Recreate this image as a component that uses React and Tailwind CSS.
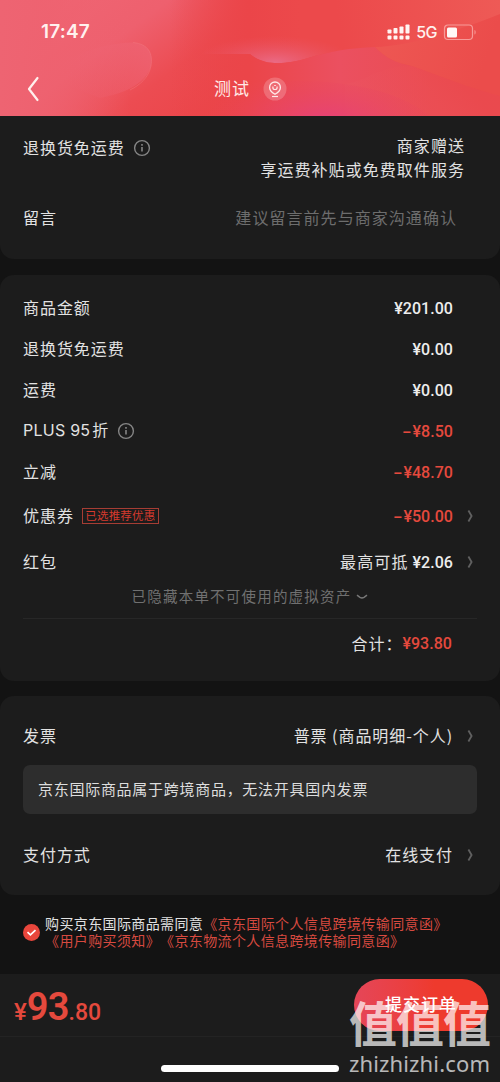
import React from "react";

function InfoIcon() {
  return (
    <svg width="18" height="18" viewBox="0 0 18 18" fill="none" stroke="#858585" className="ml-[8px] mt-px shrink-0">
      <circle cx="9" cy="9" r="7.4" strokeWidth="1.4" />
      <path d="M9 7.9V12.6M9 5V6.7" strokeWidth="1.6" />
    </svg>
  );
}

function Chevron() {
  return (
    <svg width="8" height="14" viewBox="0 0 8 14" fill="none" stroke="#606060" strokeWidth="1.8" className="ml-[14px] mr-[2px] shrink-0">
      <path d="M1.4 1.5L4.6 7L1.4 12.5" />
    </svg>
  );
}

function Row({ label, extra, value, arrow, className }) {
  return (
    <div className={"flex items-center justify-between pl-[23px] " + (arrow ? "pr-[23px] " : "pr-[47px] ") + className}>
      <div className="flex items-center">
        <span className="pb-[2px]">{label}</span>
        {extra}
      </div>
      <div className="flex items-center">
        {value}
        {arrow && <Chevron />}
      </div>
    </div>
  );
}

function Money({ children, red, minus }) {
  return (
    <span className={"flex items-center pt-[2px] font-[Roboto,sans-serif] text-[16px] font-medium tracking-[0.05px] " + (red ? "text-[#e5493d]" : "text-[#ededed]")}>
      {minus && <span className="mr-px inline-block origin-right scale-x-[1.7]">-</span>}
      {children}
    </span>
  );
}

function HeaderArt() {
  return (
    <svg className="absolute inset-0" width="500" height="116" viewBox="0 0 500 116">
      <defs>
        <linearGradient id="base" x1="30" y1="0" x2="170" y2="190" gradientUnits="userSpaceOnUse">
          <stop offset="0" stopColor="#ef6674" />
          <stop offset="0.35" stopColor="#ee606e" />
          <stop offset="0.6" stopColor="#ec4c52" />
          <stop offset="1" stopColor="#ea4144" />
        </linearGradient>
        <linearGradient id="left" x1="0" y1="0" x2="130" y2="0" gradientUnits="userSpaceOnUse">
          <stop offset="0" stopColor="#ee6472" />
          <stop offset="0.35" stopColor="#ee6270" stopOpacity="0.8" />
          <stop offset="1" stopColor="#ee6270" stopOpacity="0" />
        </linearGradient>
        <linearGradient id="blob" x1="70" y1="90" x2="152" y2="52" gradientUnits="userSpaceOnUse">
          <stop offset="0" stopColor="#ee6272" stopOpacity="0" />
          <stop offset="1" stopColor="#ee6474" stopOpacity="0.75" />
        </linearGradient>
        <linearGradient id="mid" x1="170" y1="0" x2="300" y2="0" gradientUnits="userSpaceOnUse">
          <stop offset="0" stopColor="#ea4448" stopOpacity="0" />
          <stop offset="0.6" stopColor="#eb4549" />
          <stop offset="1" stopColor="#ec494b" />
        </linearGradient>
        <radialGradient id="pink" cx="0" cy="0" r="1" gradientTransform="translate(275 62) scale(80 26)" gradientUnits="userSpaceOnUse">
          <stop offset="0" stopColor="#ea6a84" />
          <stop offset="1" stopColor="#ea5566" stopOpacity="0" />
        </radialGradient>
        <linearGradient id="glow" x1="340" y1="30" x2="500" y2="0" gradientUnits="userSpaceOnUse">
          <stop offset="0" stopColor="#ee5a56" stopOpacity="0" />
          <stop offset="1" stopColor="#ee5a56" />
        </linearGradient>
        <linearGradient id="wave" x1="250" y1="0" x2="430" y2="0" gradientUnits="userSpaceOnUse">
          <stop offset="0" stopColor="#eb4549" />
          <stop offset="0.5" stopColor="#eb5060" />
          <stop offset="1" stopColor="#ea4c52" />
        </linearGradient>
        <linearGradient id="right" x1="385" y1="50" x2="480" y2="80" gradientUnits="userSpaceOnUse">
          <stop offset="0" stopColor="#ed5652" />
          <stop offset="1" stopColor="#eb4c4b" />
        </linearGradient>
        <linearGradient id="shade" x1="375" y1="116" x2="450" y2="60" gradientUnits="userSpaceOnUse">
          <stop offset="0" stopColor="#eb5462" />
          <stop offset="0.6" stopColor="#ec4f55" />
          <stop offset="1" stopColor="#ea4648" />
        </linearGradient>
        <radialGradient id="low" cx="0" cy="0" r="1" gradientTransform="translate(325 120) scale(120 48)" gradientUnits="userSpaceOnUse">
          <stop offset="0" stopColor="#e74276" />
          <stop offset="1" stopColor="#e9465a" stopOpacity="0" />
        </radialGradient>
        <clipPath id="above">
          <path d="M180 0H500V47H375C350 48 331 51 308 58C285 65 264 66 250 54L180 54Z" />
        </clipPath>
      </defs>
      <rect width="500" height="116" fill="url(#base)" />
      <rect width="500" height="116" fill="url(#left)" />
      <path d="M40 75C65 60 95 43 133 42.500C149 44 153 54 151 66C146 82 130 92 100 98Z" fill="url(#blob)" />
      <path d="M133 42.500C149 44 153 54 151 66C149 77 140 85 130 90" fill="none" stroke="#f37c84" strokeOpacity="0.4" />
      <rect width="500" height="116" fill="url(#mid)" />
      <g clipPath="url(#above)">
        <rect x="190" y="30" width="170" height="50" fill="url(#pink)" />
        <rect x="300" width="200" height="60" fill="url(#glow)" />
      </g>
      <path d="M250 54C264 66 285 65 308 58C331 51 350 48 375 47C386 58 394 62 412 66C440 76 470 88 500 96V116H250Z" fill="url(#wave)" />
      <path d="M375 47C410 46 460 30 500 14V96C470 88 440 76 412 66C394 62 386 58 375 47Z" fill="url(#right)" />
      <path d="M345 84C370 80 380 65 412 66C440 76 470 88 500 96V116H345Z" fill="url(#shade)" opacity="0.4" />
      <path d="M200 86C260 80 310 79 345 84C385 90 410 100 430 116H200Z" fill="url(#low)" />
    </svg>
  );
}

function StatusBar() {
  const heights = [4, 5.5, 7, 9];
  return (
    <div className="flex h-[64px] items-center justify-between pl-[41px] pr-[23px]">
      <span className="text-[19px] font-semibold tracking-[0.2px] text-[#fff1ee] font-[Inter,sans-serif]">17:47</span>
      <div className="flex items-center">
        <svg width="24" height="18" viewBox="0 0 24 18" fill="#fff4f2" className="mr-px">
          {heights.map((h, i) => (
            <g key={i}>
              <rect x={0.5 + i * 6} y={10.5 - h} width="4" height={h} rx="0.8" />
              <rect x={0.5 + i * 6} y="12.500" width="4" height="4" rx="1" />
            </g>
          ))}
        </svg>
        <span className="ml-[4px] text-[16px] leading-none text-[#fff1ee] font-[Inter,sans-serif] font-medium tracking-[-0.5px]">5G</span>
        <svg width="34" height="17" viewBox="0 0 34 17" className="ml-[6px]">
          <rect x="1.500" y="1" width="28" height="14.500" rx="3.500" fill="none" stroke="#f79a98" strokeWidth="1.200" />
          <rect x="4" y="3.500" width="10" height="10" rx="1.500" fill="#fff8f6" />
          <path d="M31.500 6V10.500C33 10 33 6.500 31.500 6Z" fill="#f79a98" />
        </svg>
      </div>
    </div>
  );
}

export default function App() {
  return (
    <div className="flex h-[1082px] w-[500px] flex-col overflow-hidden bg-[#131313] text-[16px] leading-[24px] tracking-[0.95px] text-[#e2e2e2] font-['Noto_Sans_CJK_SC',sans-serif]">
      <header className="relative h-[116px] shrink-0 overflow-hidden">
        <HeaderArt />
        <div className="relative">
          <StatusBar />
          <div className="grid h-[49px] grid-cols-[214px_1fr] items-center">
            <svg width="16" height="28" viewBox="0 0 16 28" fill="none" stroke="#fff0ed" strokeWidth="2.200" className="ml-[25px]" strokeLinecap="round" strokeLinejoin="round">
              <path d="M12.500 3L4 14L12.500 25" />
            </svg>
            <div className="flex items-center">
              <span className="pb-[2px] text-[17px] text-[#ffe9e6]">测试</span>
              <svg width="24" height="24" viewBox="0 0 24 24" fill="none" stroke="#ffe8e8" className="ml-[13px]">
                <circle cx="12" cy="12" r="11.500" fill="#fff" fillOpacity="0.2" stroke="none" />
                <path d="M12 17.300C9 15.500 6.600 13.300 6.600 10.400A5.400 5.400 0 0 1 17.400 10.400C17.400 13.300 15 15.500 12 17.300Z" strokeWidth="1.300" />
                <path d="M9.900 9.600V10.400A2.100 2.100 0 0 0 14.100 10.400V9.600M11.200 8.500H12.800" strokeWidth="1.200" />
                <path d="M9 19.500H15" strokeWidth="1.200" />
              </svg>
            </div>
          </div>
        </div>
      </header>

      <section className="h-[143px] shrink-0 rounded-b-[14px] bg-[#1c1c1c] pt-[17px]">
        <div className="flex h-[50px] justify-between pl-[23px] pr-[35px]">
          <div className="flex h-[28px] items-center">
            <span>退换货免运费</span>
            <InfoIcon />
          </div>
          <div className="text-right leading-[24px] tracking-[1.050px]">
            <div>商家赠送</div>
            <div>享运费补贴或免费取件服务</div>
          </div>
        </div>
        <Row
          className="mt-[18px] h-[34px] pr-[43px]!"
          label="留言"
          value={<span className="pb-[2px] tracking-[1.050px] text-[#6d6d6d]">建议留言前先与商家沟通确认</span>}
        />
      </section>

      <section className="mt-[16px] h-[406px] shrink-0 rounded-[14px] bg-[#1c1c1c] pt-[12px]">
        <Row className="h-[41px]" label="商品金额" value={<Money>¥201.00</Money>} />
        <Row className="h-[41px]" label="退换货免运费" value={<Money>¥0.00</Money>} />
        <Row className="h-[41px]" label="运费" value={<Money>¥0.00</Money>} />
        <Row
          className="h-[41px]"
          label={<><span className="font-[Inter,sans-serif] tracking-[0.25px]">PLUS 95</span><span className="ml-[2px]">折</span></>}
          extra={<InfoIcon />}
          value={<Money red minus>¥8.50</Money>}
        />
        <Row className="h-[41px]" label="立减" value={<Money red minus>¥48.70</Money>} />
        <Row
          className="h-[46px] pt-[2px]"
          arrow
          label="优惠券"
          extra={<span className="ml-[8px] flex h-[16px] w-[77px] items-center justify-center border border-[#a63d34] text-[11.500px] leading-none tracking-[0.2px] text-[#d63a2e]">已选推荐优惠</span>}
          value={<Money red minus>¥50.00</Money>}
        />
        <Row
          className="h-[46px] pt-[2px]"
          arrow
          label="红包"
          value={<><span className="mr-[4px] pb-[2px] tracking-[1.100px]">最高可抵</span><Money>¥2.06</Money></>}
        />
        <div className="flex h-[23px] items-center justify-center text-[14.500px] tracking-[1.200px] text-[#707070]">
          已隐藏本单不可使用的虚拟资产
          <svg width="12" height="6" viewBox="0 0 12 6" fill="none" stroke="#777" strokeWidth="1.500" className="ml-[5px] mt-[2px]">
            <path d="M1 1.200L4 3.300Q6 4.500 8 3.300L11 1.200" />
          </svg>
        </div>
        <div className="mx-[23px] mt-[11px] border-t border-[#272727]" />
        <div className="flex h-[48px] items-center justify-end pr-[48px]">
          <span>合计：</span>
          <Money red>¥93.80</Money>
        </div>
      </section>

      <section className="mt-[15px] h-[199px] shrink-0 rounded-[14px] bg-[#1c1c1c] pt-[15px]">
        <Row className="h-[49px]" arrow label="发票" value={<span className="pb-[2px]">普票 (商品明细-个人)</span>} />
        <div className="mx-[23px] mt-[5px] flex h-[49px] items-center rounded-[7px] bg-[#2d2d2d] pb-px pl-[15px] text-[15px] tracking-[0.720px] text-[#dedede]">
          京东国际商品属于跨境商品，无法开具国内发票
        </div>
        <Row className="mt-[18px] h-[46px]" arrow label="支付方式" value={<span className="pb-[2px]">在线支付</span>} />
      </section>

      <section className="flex h-[79px] shrink-0 pl-[23px] pt-[20px]">
        <svg width="17" height="17" viewBox="0 0 17 17" fill="none" className="mt-[9px] shrink-0">
          <circle cx="8.500" cy="8.500" r="8.500" fill="#e9463c" />
          <path d="M4.500 8.200L7.400 10.900L12.500 6.200" stroke="#fff" strokeWidth="1.700" />
        </svg>
        <div className="ml-[5px] whitespace-nowrap text-[14px] leading-[17px] tracking-[0.380px] text-[#d74a40] [text-spacing-trim:space-all]">
          <div><span className="text-[#e2e2e2]">购买京东国际商品需同意</span>《京东国际个人信息跨境传输同意函》</div>
          <div>《用户购买须知》《京东物流个人信息跨境传输同意函》</div>
        </div>
      </section>

      <footer className="relative h-[108px] shrink-0 bg-[#1c1c1c]">
        <div className="flex h-[63px] items-start justify-between border-b border-[#232323] pl-[14px] pr-[12px]">
          <div className="flex items-baseline pt-[10px] font-[Roboto,sans-serif] font-medium tracking-normal text-[#e5493d]">
            <span className="text-[24px] leading-[46px]">¥</span>
            <span className="text-[38px] font-semibold leading-[46px] tracking-[-0.800px]">93</span>
            <span className="text-[23px] leading-[46px]">.80</span>
          </div>
          <button className="mt-[5px] flex h-[52px] w-[134px] items-center justify-center rounded-full bg-linear-to-r from-[#e54658] to-[#ee3a2d] to-60% pb-[2px] text-[17px] font-medium text-white">
            提交订单
          </button>
        </div>
        <div className="ml-[161px] mt-[28px] h-[7px] w-[178px] rounded-full bg-white" />
        <div className="pointer-events-none absolute left-[349px] top-[21px] text-white/70">
          <div className="whitespace-nowrap text-[48px] font-bold leading-[52px] tracking-[-1px]">值值值</div>
          <div className="pt-[2px] whitespace-nowrap text-[22px] leading-[28px] tracking-[0.150px] font-['Noto_Sans',sans-serif]">zhizhizhi.com</div>
        </div>
      </footer>
    </div>
  );
}
